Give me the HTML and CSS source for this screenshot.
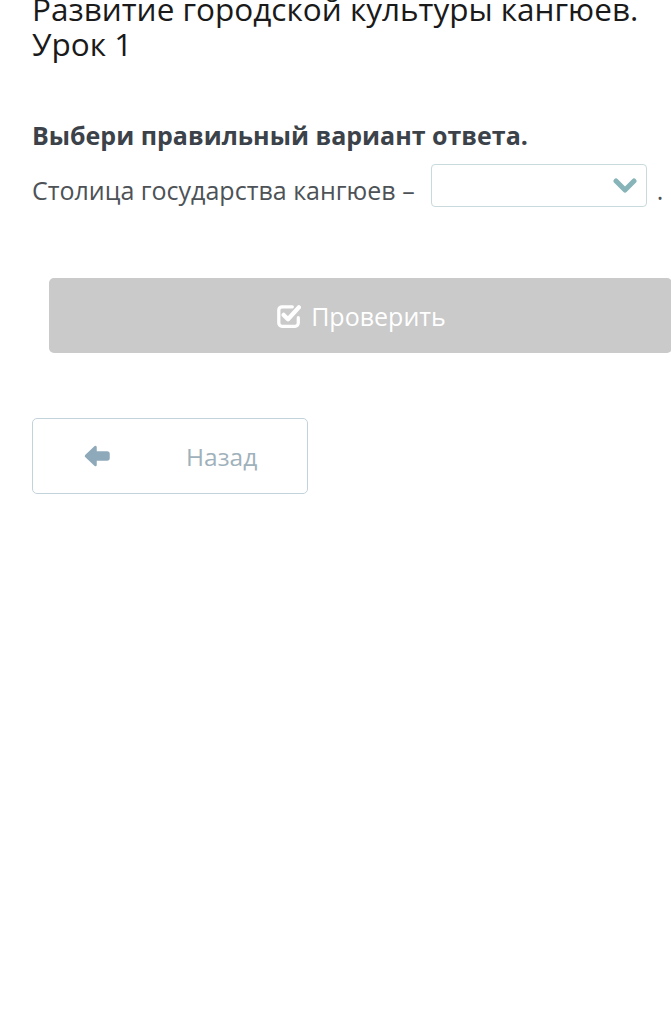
FILE: index.html
```html
<!DOCTYPE html>
<html lang="ru">
<head>
  <meta charset="UTF-8">
  <meta name="viewport" content="width=device-width, initial-scale=1.0">
  <title>Развитие городской культуры кангюев</title>
  <link rel="stylesheet" href="styles.css">
</head>
<body>

<div class="content">
  <h1 class="lesson-title">Развитие городской культуры кангюев. Урок 1</h1>

  <!-- Task -->
  <div class="task">
    <p class="task-hint">Выбери правильный вариант ответа.</p>
    <div class="task-line">
      <span>Столица государства кангюев –</span>
      <div class="select-box">
        <svg class="chevron" viewBox="0 0 24 16" width="24" height="16">
          <polyline points="3,3 12,12 21,3" fill="none" stroke="#86b4b8" stroke-width="5" stroke-linecap="round" stroke-linejoin="round"/>
        </svg>
      </div>
      <span class="dot">.</span>
    </div>
  </div>

  <button class="btn-check">
    <svg viewBox="0 0 24 24" width="26" height="26">
      <path d="M16 3.5 H6.5 a3 3 0 0 0 -3 3 v12 a3 3 0 0 0 3 3 h12 a3 3 0 0 0 3 -3 v-5" fill="none" stroke="#fff" stroke-width="3" stroke-linecap="round"/>
      <polyline points="8,11 12,15 22,4" fill="none" stroke="#fff" stroke-width="4" stroke-linecap="round" stroke-linejoin="round"/>
    </svg>
    <span>Проверить</span>
  </button>

  <button class="btn-back">
    <svg viewBox="0 0 26 22" width="26" height="22">
      <path d="M2 11 L11.5 2 V7.5 H23 a1.5 1.5 0 0 1 1.5 1.5 v4 a1.5 1.5 0 0 1 -1.5 1.5 H11.5 V20 Z" fill="#8ea9ba" stroke="#8ea9ba" stroke-width="2.5" stroke-linejoin="round"/>
    </svg>
    <span>Назад</span>
  </button>
</div>

</body>
</html>
```

FILE: styles.css
```css
body {
  font-family: "Open Sans", Arial, sans-serif;
  background-color: #fff;
  margin: 0;
  padding: 0;
}

.content {
  padding: 0 32px;
  overflow: hidden;
}

.lesson-title {
  margin: -9px -16px 0 0;
  font-size: 31.5px;
  font-weight: 400;
  line-height: 35px;
  color: #1a1a1a;
}

.task {
  margin-top: 59px;
}

.task-hint {
  margin: 0;
  font-size: 25px;
  font-weight: 700;
  line-height: 30px;
  color: #3c4249;
}

.task-line {
  display: flex;
  align-items: flex-end;
  gap: 16px;
  margin-top: 14px;
  font-size: 25px;
  color: #4d5257;
  white-space: nowrap;
}

.task-line > * {
  flex-shrink: 0;
}

.select-box {
  width: 205px;
  height: 41px;
  border: 1px solid #c8dadb;
  border-radius: 4px;
  display: flex;
  align-items: center;
  justify-content: flex-end;
  padding-right: 9px;
  box-sizing: content-box;
}

.task-line .dot {
  margin-left: -6px;
}

.btn-check {
  display: flex;
  align-items: center;
  justify-content: center;
  gap: 10px;
  width: calc(100% + 16px);
  height: 75px;
  margin: 71px 0 0 17px;
  background-color: #cacaca;
  border: none;
  border-radius: 5px;
  color: #fff;
  font-family: inherit;
  font-size: 25px;
}

.btn-back {
  display: flex;
  align-items: center;
  width: 276px;
  height: 76px;
  margin-top: 65px;
  padding: 0 0 0 51px;
  background-color: #fff;
  border: 1px solid #c3d3dc;
  border-radius: 5px;
  color: #9fb1bb;
  font-family: inherit;
  font-size: 24.5px;
}

.btn-back span {
  margin-left: 76px;
}
```
